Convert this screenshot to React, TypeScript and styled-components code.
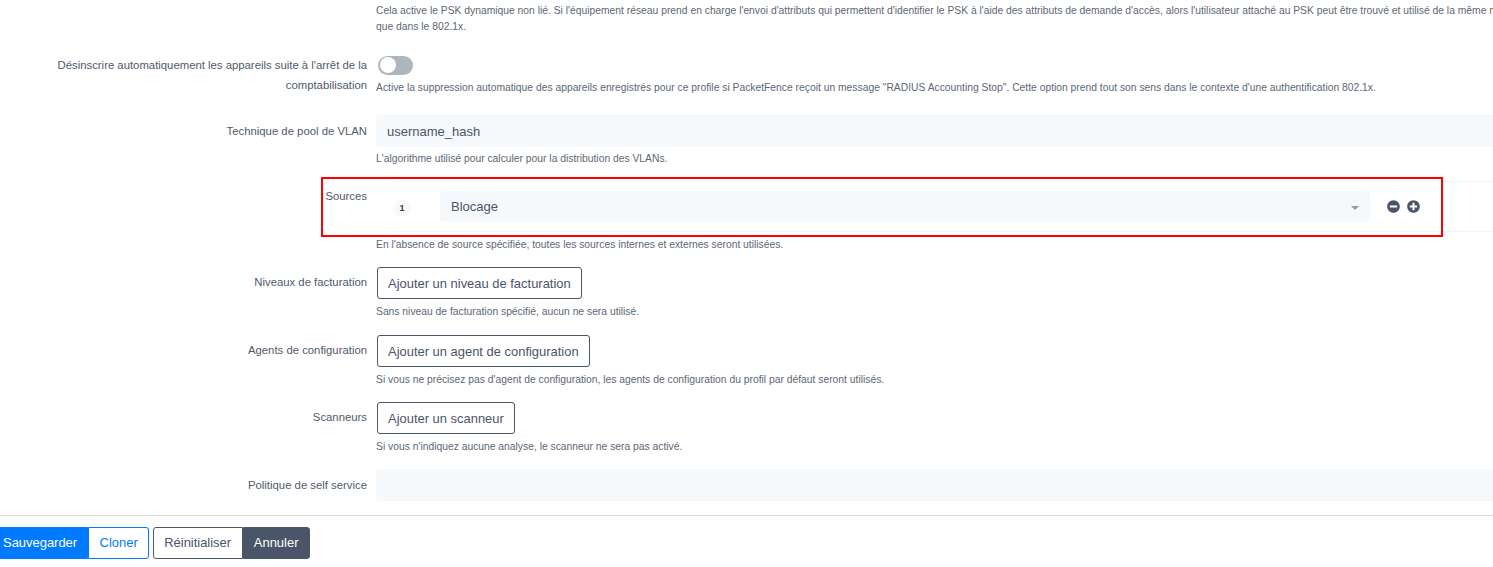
import { ReactNode } from 'react';
import { createGlobalStyle, styled } from 'styled-components';
import { FaMinusCircle, FaPlusCircle } from 'react-icons/fa';

const GlobalStyle = createGlobalStyle`
  html, body {
    margin: 0;
    padding: 0;
    height: 100%;
    overflow: hidden;
    background: #fff;
  }

  body {
    font-family: "Liberation Sans", Arial, sans-serif;
  }
`;

type LabelKind = 'plain' | 'compact' | 'field';

interface IRowProps {
  label?: ReactNode;
  help?: ReactNode;
  kind?: LabelKind;
  children?: ReactNode;
}

function Row({ label, help, kind = 'plain', children }: IRowProps) {
  return (
    <RowGrid>
      <Label $kind={kind}>{label}</Label>
      <Control>
        {children}
        {help && <Help>{help}</Help>}
      </Control>
    </RowGrid>
  );
}

export default function App() {
  return (
    <Page>
      <GlobalStyle />
      <Form>
        <Row
          help={
            <>
              Cela active le PSK dynamique non lié. Si l'équipement réseau prend en charge l'envoi d'attributs qui permettent d'identifier le PSK à l'aide des attributs de demande d'accès, alors l'utilisateur attaché au PSK peut être trouvé et utilisé de la même manière
              <br />
              que dans le 802.1x.
            </>
          }
        />
        <Row
          kind="compact"
          label="Désinscrire automatiquement les appareils suite à l'arrêt de la comptabilisation"
          help={`Active la suppression automatique des appareils enregistrés pour ce profile si PacketFence reçoit un message "RADIUS Accounting Stop". Cette option prend tout son sens dans le contexte d'une authentification 802.1x.`}
        >
          <Toggle />
        </Row>
        <Row
          kind="field"
          label="Technique de pool de VLAN"
          help="L'algorithme utilisé pour calculer pour la distribution des VLANs."
        >
          <Input>username_hash</Input>
        </Row>
        <Row
          label={<SourcesLabel>Sources</SourcesLabel>}
          help="En l'absence de source spécifiée, toutes les sources internes et externes seront utilisées."
        >
          <SourceTable>
            <Badge>1</Badge>
            <Select>
              Blocage
              <Caret />
            </Select>
            <Actions>
              <FaMinusCircle />
              <FaPlusCircle />
            </Actions>
            <Highlight />
          </SourceTable>
        </Row>
        <Row
          label="Niveaux de facturation"
          help="Sans niveau de facturation spécifié, aucun ne sera utilisé."
        >
          <AddButton>Ajouter un niveau de facturation</AddButton>
        </Row>
        <Row
          label="Agents de configuration"
          help="Si vous ne précisez pas d'agent de configuration, les agents de configuration du profil par défaut seront utilisés."
        >
          <AddButton>Ajouter un agent de configuration</AddButton>
        </Row>
        <Row
          label="Scanneurs"
          help="Si vous n'indiquez aucune analyse, le scanneur ne sera pas activé."
        >
          <AddButton>Ajouter un scanneur</AddButton>
        </Row>
        <Row kind="field" label="Politique de self service">
          <Input />
        </Row>
      </Form>
      <Footer>
        <ButtonGroup>
          <SaveButton>Sauvegarder</SaveButton>
          <CloneButton>Cloner</CloneButton>
        </ButtonGroup>
        <ButtonGroup>
          <ResetButton>Réinitialiser</ResetButton>
          <CancelButton>Annuler</CancelButton>
        </ButtonGroup>
      </Footer>
    </Page>
  );
}

const labelPadding: Record<LabelKind, string> = {
  plain: '5px 0 5px 50px',
  compact: '4.7px 0 4.5px 50px',
  field: '6px 0 4px 50px',
};

const Page = styled.div`
  width: 1493px;
  height: 567px;
  overflow: hidden;
  color: #4a5568;
`;

const Form = styled.div`
  width: 1700px;
  margin-top: -1px;
  display: flex;
  flex-direction: column;
  gap: 15.3px;
`;

const RowGrid = styled.div`
  display: grid;
  grid-template-columns: 367px 1fr;
  column-gap: 9px;
`;

const Label = styled.label<{ $kind: LabelKind }>`
  padding: ${({ $kind }) => labelPadding[$kind]};
  font-size: 11.33px;
  line-height: 20px;
  text-align: right;
  color: #4f5a6b;
`;

const SourcesLabel = styled.span`
  position: relative;
  top: -1px;
`;

const Control = styled.div`
  min-width: 0;
`;

const Help = styled.div`
  margin-top: 4px;
  font-size: 10.32px;
  line-height: 16px;
  white-space: nowrap;
  color: #5d6776;
`;

const Toggle = styled.div`
  position: relative;
  box-sizing: border-box;
  width: 35px;
  height: 19px;
  margin: 5.5px 0 5px 2px;
  border-radius: 10px;
  background: #adb5bd;

  &::after {
    content: '';
    position: absolute;
    top: 1.5px;
    left: 1.5px;
    width: 16px;
    height: 16px;
    border-radius: 50%;
    background: #fff;
  }
`;

const Input = styled.div`
  box-sizing: border-box;
  height: 32px;
  padding: 0 11px;
  border-radius: 4px;
  background: #f6f9fc;
  font-size: 13px;
  line-height: 33px;
  color: #4a5568;
`;

const SourceTable = styled.div`
  position: relative;
  box-sizing: border-box;
  display: flex;
  align-items: center;
  height: 51px;
  margin: -0.9px 0 0 17px;
  border-top: 1px solid #f3f4f6;
  border-bottom: 1px solid #f3f4f6;

  & + div {
    margin-top: 5px;
    margin-bottom: -1px;
  }
`;

const Badge = styled.span`
  display: flex;
  align-items: center;
  justify-content: center;
  flex: none;
  width: 18px;
  height: 18px;
  margin: 2px 29px 0 0;
  border-radius: 50%;
  background: #f8f9fa;
  font-size: 9px;
  font-weight: 700;
  color: #343a40;
`;

const Select = styled.div`
  position: relative;
  box-sizing: border-box;
  flex: none;
  width: 930px;
  height: 31px;
  padding: 0 11px;
  border-radius: 4px;
  background: #f6f9fc;
  font-size: 13px;
  line-height: 31px;
  color: #4a5568;
`;

const Caret = styled.span`
  position: absolute;
  top: 15px;
  right: 11px;
  border-style: solid;
  border-width: 4px 4px 0;
  border-color: #999 transparent transparent;
`;

const Actions = styled.div`
  display: flex;
  align-items: center;
  gap: 7px;
  margin-left: 17px;
  font-size: 13px;
  color: #4a5568;
`;

const Highlight = styled.div`
  position: absolute;
  top: -5px;
  left: -72px;
  box-sizing: border-box;
  width: 1122px;
  height: 60px;
  border: 2px solid #f00;
  pointer-events: none;
`;

const BaseButton = styled.button`
  box-sizing: border-box;
  height: 32px;
  padding: 0 10px;
  border: 1px solid #4a5568;
  background: #fff;
  font-family: inherit;
  font-size: 12.95px;
  line-height: 30px;
  color: #4a5568;
`;

const AddButton = styled(BaseButton)`
  display: block;
  margin-left: 1px;
  padding-top: 1px;
  border-radius: 3px;

  & + div {
    margin-top: 5px;
    margin-bottom: -1px;
  }
`;

const Footer = styled.div`
  display: flex;
  gap: 4px;
  margin: 13.8px 0 0 -10px;
  padding: 11px 0;
  border-top: 1px solid #dcdcdc;
`;

const ButtonGroup = styled.div`
  display: flex;
`;

const SaveButton = styled(BaseButton)`
  padding: 0 10px 0 12px;
  border-color: #007bff;
  border-radius: 3px 0 0 3px;
  background: #007bff;
  color: #fff;
`;

const CloneButton = styled(BaseButton)`
  padding: 0 10.5px;
  border-color: #007bff;
  border-radius: 0 3px 3px 0;
  color: #007bff;
`;

const ResetButton = styled(BaseButton)`
  padding: 0 10.5px 0 10px;
  border-radius: 3px 0 0 3px;
`;

const CancelButton = styled(BaseButton)`
  padding: 0 10.25px;
  border-radius: 0 3px 3px 0;
  background: #4a5568;
  color: #fff;
`;
